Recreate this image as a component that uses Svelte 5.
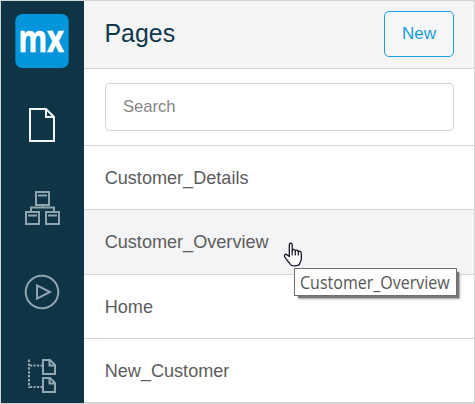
<script>
  const pages = ['Customer_Details', 'Customer_Overview', 'Home', 'New_Customer'];
  const hovered = 'Customer_Overview';
</script>

<div class="window">
  <nav>
    <svg class="logo" width="54" height="54" viewBox="0 0 54 54">
      <rect x=".3" width="53.4" height="54" rx="7" fill="#0595db" />
      <text x="3.4" y="37.6" textLength="45.6" lengthAdjust="spacingAndGlyphs">mx</text>
    </svg>
    <svg class="icon page" width="28" height="36" viewBox="0 0 28 36" stroke="#f3f6f7" stroke-width="2">
      <path d="M2 2H18L26 10V34H2ZM18 2V10H26" />
    </svg>
    <svg class="icon domain" width="37" height="36" viewBox="0 0 37 36" stroke="#8fa4ae" stroke-width="2">
      <path d="M12 2H25V15H12ZM14 5.5H23M2 22H15V34H2ZM4 25.5H13M22 22H35V34H22ZM24 25.5H33M18.5 15V17.5M7 22V17.5H30V22" />
    </svg>
    <svg class="icon play" width="36" height="36" viewBox="0 0 36 36" stroke="#8fa4ae" stroke-width="2">
      <circle cx="18" cy="18" r="16.3" />
      <path d="M13 11.4V24.6L26 18Z" />
    </svg>
    <svg class="icon tree" width="30" height="36" viewBox="0 0 30 36" stroke="#93a7b0" stroke-width="2">
      <path d="M2 1.5V30" stroke-dasharray="2.5 1.4" />
      <path d="M3 7.5H15M3 29H15" stroke-dasharray="2.2 1.3" />
      <path d="M16 2H23L28 7V16H16ZM22.5 2V7.5H28M16 20H23L28 25V34H16ZM22.5 20V25.5H28" />
    </svg>
  </nav>
  <main>
    <header>
      <h1>Pages</h1>
      <button>New</button>
    </header>
    <div class="search"><input type="text" placeholder="Search" /></div>
    <ul>
      {#each pages as page}
        <li class:hovered={page === hovered}>{page}</li>
      {/each}
    </ul>
  </main>
  <svg class="cursor" width="20" height="26" viewBox="0 0 20 26">
    <path
      d="M6.3 14.5V3C6.3 .6 9.2 .6 9.2 3V9.2C9.5 6.7 12.3 7 12.3 9.2C12.8 7.5 15.2 7.8 15.3 10C16 8.7 18.3 9.2 18.3 11.3V17C18.3 19 17 20.2 16.5 22C15.5 24.3 8.5 24.6 7.2 22.3C6 20 3.5 18 1.8 15C.6 12.5 2.8 11.5 4.2 13Z"
      fill="#fff" stroke="#15152a" stroke-width="1.3" stroke-linejoin="round" />
    <path d="M9.2 9V13.5M12.3 9V13.5M15.3 10V13.5" stroke="#15152a" stroke-width="1.2" />
  </svg>
  <div class="tooltip"><span>Customer_Overview</span></div>
</div>

<style>
  :global(body) {
    background: #fff;
  }
  .window {
    position: relative;
    box-sizing: border-box;
    width: 475px;
    height: 404px;
    display: flex;
    overflow: hidden;
    border: 1px solid #d5d5d5;
    font-family: 'Liberation Sans', Arial, sans-serif;
  }
  nav {
    box-sizing: border-box;
    width: 83px;
    padding-right: 1px;
    flex: none;
    background: #0e3446;
    display: flex;
    flex-direction: column;
    align-items: center;
  }
  nav svg {
    flex: none;
    display: block;
  }
  .logo {
    margin-top: 13px;
    overflow: visible;
  }
  .logo text {
    font: 700 37px 'Open Sans', sans-serif;
    fill: #fff;
    stroke: #fff;
    stroke-width: 0.6px;
  }
  .icon {
    fill: none;
  }
  .page {
    margin-top: 39px;
  }
  .domain {
    margin-top: 47px;
  }
  .play {
    margin-top: 48px;
  }
  .tree {
    margin-top: 48px;
  }
  main {
    flex: 1;
    height: 402px;
    color: #5c5c5c;
  }
  header {
    box-sizing: border-box;
    height: 68px;
    padding: 0 20px 0 20.5px;
    display: flex;
    align-items: center;
    justify-content: space-between;
    background: #f4f4f4;
    border-bottom: 1px solid #d5d5d5;
  }
  h1 {
    margin: 0 0 2px;
    font-size: 24.9px;
    font-weight: 400;
    color: #10384c;
  }
  button {
    box-sizing: border-box;
    width: 70px;
    height: 46px;
    margin: 0 0 1px;
    padding: 0;
    font: 17px 'Liberation Sans', Arial, sans-serif;
    color: #1b9cdc;
    background: #f6f7f8;
    border: 1px solid #1b9cdc;
    border-radius: 5px;
  }
  .search {
    box-sizing: border-box;
    height: 77px;
    padding: 14px 20px 0 21px;
    border-bottom: 1px solid #d5d5d5;
  }
  input {
    box-sizing: border-box;
    display: block;
    width: 100%;
    height: 48px;
    padding: 0 17px;
    border: 1px solid #d5d5d5;
    border-radius: 4px;
    background: #fff;
    font: 16.6px 'Liberation Sans', Arial, sans-serif;
  }
  input::placeholder {
    color: #858585;
  }
  ul {
    margin: 0;
    padding: 0;
    list-style: none;
  }
  li {
    box-sizing: border-box;
    height: 64.25px;
    padding-left: 20.7px;
    border-bottom: 1px solid #d5d5d5;
    font-size: 18.1px;
    line-height: 64.4px;
  }
  .hovered {
    background: #f3f4f6;
  }
  .cursor {
    position: absolute;
    left: 282px;
    top: 241px;
  }
  .tooltip {
    position: absolute;
    left: 293px;
    top: 267px;
    box-sizing: border-box;
    width: 163px;
    height: 28px;
    padding-left: 5px;
    border: 1px solid #707070;
    background: #fff;
    box-shadow: 3px 3px 1px -1px #777, 4px 4px 2px -1px #aaa;
    font: 18px/26px 'Open Sans', sans-serif;
    white-space: nowrap;
    color: #575757;
  }
  .tooltip span {
    display: inline-block;
    transform: scaleX(0.89);
    transform-origin: left;
  }
</style>
